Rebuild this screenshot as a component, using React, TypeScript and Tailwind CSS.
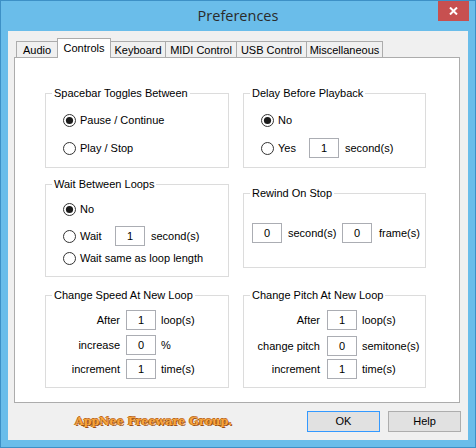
import React from 'react';

// Win8 style "Preferences" dialog
const TABS = [
  { label: 'Audio', cls: 'w-[42px]' },
  { label: 'Controls', cls: 'w-[54px]', active: true },
  { label: 'Keyboard', cls: 'w-[56px]' },
  { label: 'MIDI Control', cls: 'w-[72px]' },
  { label: 'USB Control', cls: 'w-[71px]' },
  { label: 'Miscellaneous', cls: 'w-[77px]' },
];

function Radio({ checked }: { checked?: boolean }) {
  return (
    <svg width="13" height="13" viewBox="0 0 13 13" className="shrink-0">
      <circle cx="6.5" cy="6.5" r="6" fill="#ffffff" stroke="#333333" strokeWidth="1" />
      {checked && <circle cx="6.5" cy="6.5" r="3.6" fill="#1b1b1b" />}
    </svg>
  );
}

function NumBox({ value }: { value: string }) {
  return (
    <div className="w-[30px] h-[20px] shrink-0 border border-[#abadb3] bg-white flex items-center justify-center">
      {value}
    </div>
  );
}

// legend sits at the fieldset's padding edge, so inner padding goes on a wrapper
function Group({ title, className, inner, children }: { title: string; className: string; inner?: string; children: React.ReactNode }) {
  return (
    <fieldset className={`border border-[#dcdcdc] ${className}`}>
      <legend className="ml-[6px] px-[2px] leading-[13px]">{title}</legend>
      <div className={inner}>{children}</div>
    </fieldset>
  );
}

function StepRow({ label, value, unit, labelCls, className }: { label: string; value: string; unit: string; labelCls: string; className: string }) {
  return (
    <div className={`flex items-center h-[20px] ${className}`}>
      <span className={`text-right shrink-0 ${labelCls}`}>{label}</span>
      <NumBox value={value} />
      <span className="ml-[5px]">{unit}</span>
    </div>
  );
}

export default function App() {
  return (
    <div className="w-[476px] h-[448px] border border-[#3d90c6] bg-[#6abdea] flex flex-col font-['Liberation_Sans',Arial,sans-serif] text-[11px] text-black overflow-hidden">
      {/* title bar */}
      <div className="h-[30px] shrink-0 grid grid-cols-[1fr_auto_1fr]">
        <div />
        <div className="self-center text-[14.5px] text-[#2b2b2b] font-['Open_Sans','Noto_Sans',sans-serif] leading-none">Preferences</div>
        <div className="flex justify-end pr-[6px]">
          <div className="w-[31px] h-[20px] bg-[#c75050] flex items-center justify-center">
            <svg width="9" height="8" viewBox="0 0 9 8">
              <path d="M1 0.5 L8 7.5 M8 0.5 L1 7.5" stroke="#ffffff" strokeWidth="2" />
            </svg>
          </div>
        </div>
      </div>

      {/* client area */}
      <div className="mx-[7px] h-[409px] bg-[#f0f0f0] flex flex-col pt-[7px]">
        {/* tabs */}
        <div className="flex items-end h-[19px] ml-[8px]">
          {TABS.map((t, i) =>
            t.active ? (
              <div
                key={t.label}
                className={`relative z-10 h-[20px] -mb-px -ml-px bg-white border-t border-l border-r border-[#acacac] flex items-center justify-center ${t.cls}`}
              >
                {t.label}
              </div>
            ) : (
              <div
                key={t.label}
                className={`h-[16px] bg-[#f0f0f0] border-t border-l border-r border-[#acacac] flex items-center justify-center pt-px ${i > 0 ? '-ml-px' : ''} ${t.cls}`}
              >
                {t.label}
              </div>
            )
          )}
        </div>

        {/* tab page */}
        <div className="ml-[6px] w-[446px] h-[346px] shrink-0 border border-[#acacac] bg-white pt-[29px] pl-[30px]">
          {/* row 1 */}
          <div className="flex gap-[14px]">
            <Group title="Spacebar Toggles Between" className="w-[184px] h-[81px]" inner="pl-[17px]">
              <div className="flex items-center gap-[4px] h-[20px] mt-[10px]">
                <Radio checked />
                <span>Pause / Continue</span>
              </div>
              <div className="flex items-center gap-[4px] h-[20px] mt-[8px]">
                <Radio />
                <span>Play / Stop</span>
              </div>
            </Group>
            <Group title="Delay Before Playback" className="w-[183px] h-[81px]" inner="pl-[17px]">
              <div className="flex items-center gap-[4px] h-[20px] mt-[10px]">
                <Radio checked />
                <span>No</span>
              </div>
              <div className="flex items-center h-[20px] mt-[8px]">
                <Radio />
                <span className="ml-[4px] w-[31px] shrink-0">Yes</span>
                <NumBox value="1" />
                <span className="ml-[6px]">second(s)</span>
              </div>
            </Group>
          </div>

          {/* row 2 */}
          <div className="flex items-center gap-[14px] mt-[10px]">
            <Group title="Wait Between Loops" className="w-[184px] h-[99px]" inner="pl-[17px]">
              <div className="flex items-center gap-[4px] h-[20px] mt-[8px]">
                <Radio checked />
                <span>No</span>
              </div>
              <div className="flex items-center h-[20px] mt-[7px]">
                <Radio />
                <span className="ml-[4px] w-[35px] shrink-0">Wait</span>
                <NumBox value="1" />
                <span className="ml-[6px]">second(s)</span>
              </div>
              <div className="flex items-center gap-[4px] h-[20px] mt-[2px]">
                <Radio />
                <span>Wait same as loop length</span>
              </div>
            </Group>
            <Group title="Rewind On Stop" className="w-[183px] h-[81px]" inner="pl-[8px]">
              <div className="flex items-center h-[20px] mt-[23px]">
                <NumBox value="0" />
                <span className="ml-[6px] w-[54px] shrink-0">second(s)</span>
                <NumBox value="0" />
                <span className="ml-[7px]">frame(s)</span>
              </div>
            </Group>
          </div>

          {/* row 3 */}
          <div className="flex gap-[14px] mt-[12px]">
            <Group title="Change Speed At New Loop" className="w-[184px] h-[99px]">
              <StepRow label="After" value="1" unit="loop(s)" labelCls="w-[80px] pr-[6px]" className="mt-[8px]" />
              <StepRow label="increase" value="0" unit="%" labelCls="w-[80px] pr-[6px]" className="mt-[5px]" />
              <StepRow label="increment" value="1" unit="time(s)" labelCls="w-[80px] pr-[6px]" className="mt-[4px]" />
            </Group>
            <Group title="Change Pitch At New Loop" className="w-[183px] h-[99px]">
              <StepRow label="After" value="1" unit="loop(s)" labelCls="w-[83px] pr-[7px]" className="mt-[8px]" />
              <StepRow label="change pitch" value="0" unit="semitone(s)" labelCls="w-[83px] pr-[7px]" className="mt-[6px]" />
              <StepRow label="increment" value="1" unit="time(s)" labelCls="w-[83px] pr-[7px]" className="mt-[3px]" />
            </Group>
          </div>
        </div>

        {/* footer */}
        <div className="flex items-center h-[21px] mt-[8px] pr-[7px]">
          <span className="ml-[67px] font-['DejaVu_Serif',serif] font-bold text-[11.2px] leading-none text-[#f7a53c] [text-shadow:1px_1px_0_#9a4f12,-1px_0_0_#c06a1c,0_-1px_0_#c06a1c]">
            AppNee Freeware Group.
          </span>
          <div className="ml-auto flex gap-[8px]">
            <button className="w-[73px] h-[21px] bg-[#e1e1e1] border border-[#3399ff] text-[11px]">OK</button>
            <button className="w-[73px] h-[21px] bg-[#e1e1e1] border border-[#adadad] text-[11px]">Help</button>
          </div>
        </div>
      </div>
    </div>
  );
}
